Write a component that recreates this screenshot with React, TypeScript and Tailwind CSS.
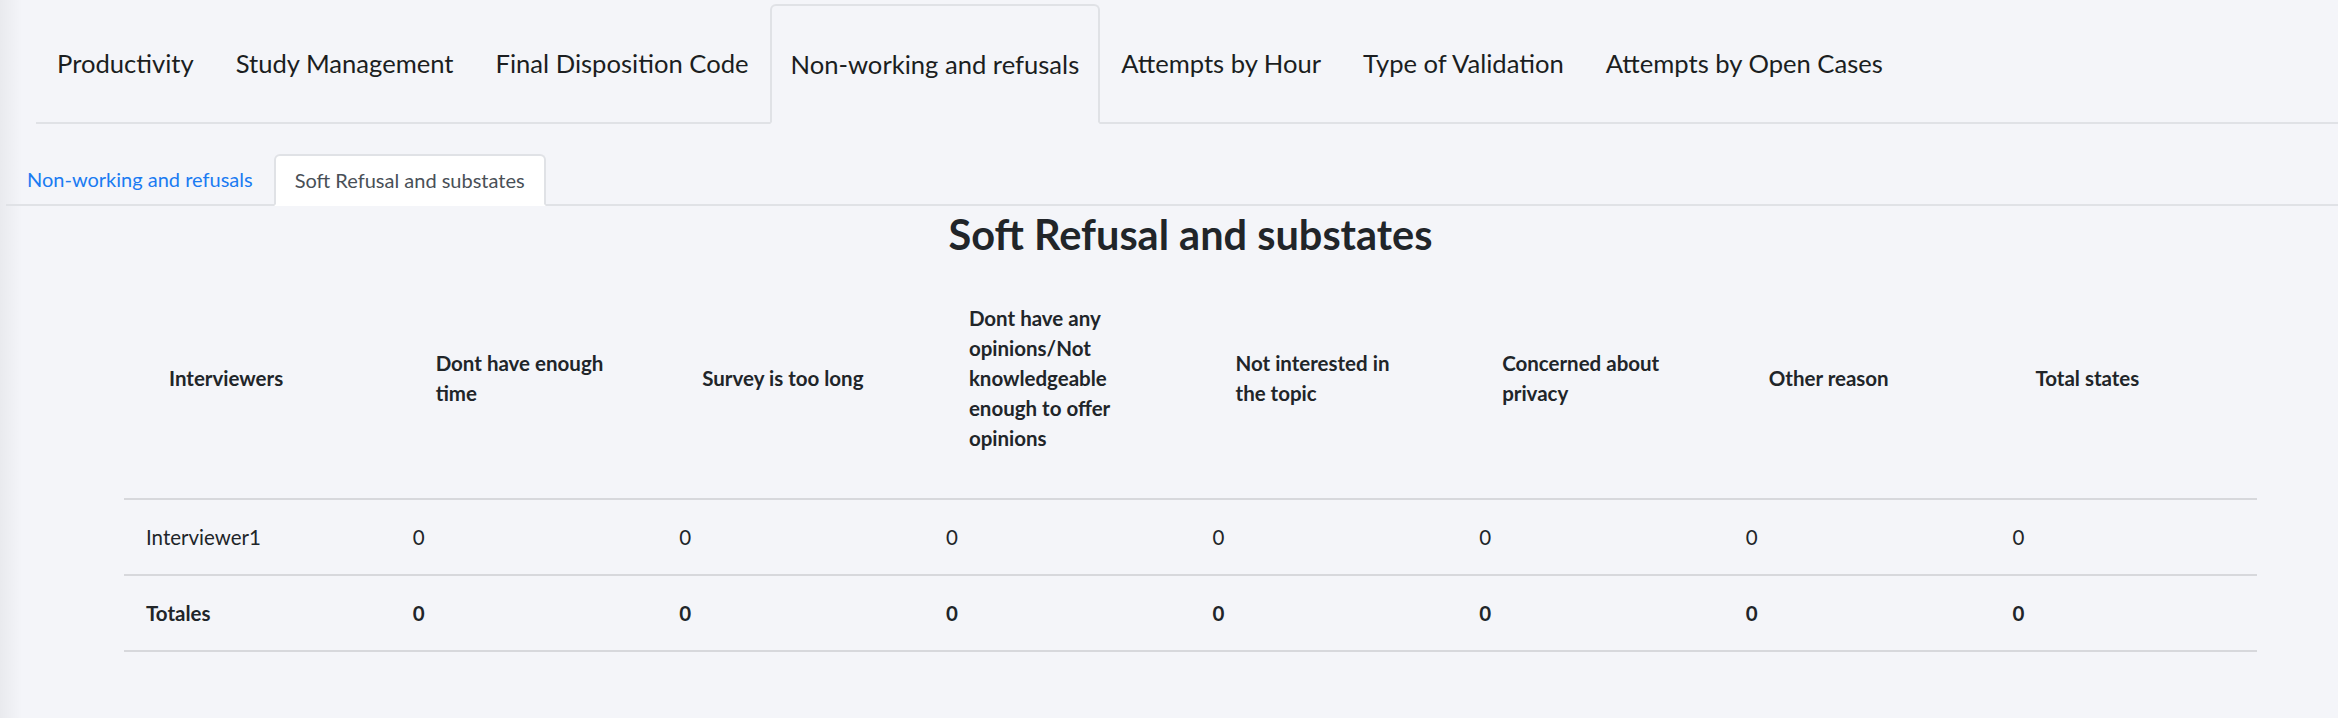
import React from "react";

const topTabs = [
  "Productivity",
  "Study Management",
  "Final Disposition Code",
  "Non-working and refusals",
  "Attempts by Hour",
  "Type of Validation",
  "Attempts by Open Cases",
];

const headers: string[][] = [
  ["Interviewers"],
  ["Dont have enough", "time"],
  ["Survey is too long"],
  ["Dont have any", "opinions/Not", "knowledgeable", "enough to offer", "opinions"],
  ["Not interested in", "the topic"],
  ["Concerned about", "privacy"],
  ["Other reason"],
  ["Total states"],
];

export default function App() {
  return (
    <div className="relative min-h-[718px] w-full overflow-hidden bg-[#f4f5f9] font-['Lato',sans-serif] text-[#212529]">
      <div className="pointer-events-none absolute inset-y-0 left-0 w-[22px] bg-gradient-to-r from-[#e9eaee] to-[#f4f5f9]" />
      <div className="relative">
        {/* top tabs */}
        <div className="ml-[36px] mt-[4px] flex border-b-2 border-[#e0e2e6]">
          {topTabs.map((t, i) =>
            i === 3 ? (
              <div
                key={t}
                className="-mb-[2px] flex h-[120px] items-center rounded-t-[6px] border-2 border-[#e0e2e6] border-b-[#f4f5f9] bg-[#f4f5f9] px-[19px] text-[25.6px] text-[#1b1e21]"
              >
                {t}
              </div>
            ) : (
              <div
                key={t}
                className="flex h-[118px] items-center border-2 border-transparent px-[19px] text-[25.6px] text-[#1b1e21]"
              >
                {t}
              </div>
            )
          )}
        </div>

        {/* sub tabs */}
        <div className="ml-[6px] mt-[30px] flex border-b-2 border-[#e0e2e6]">
          <div className="flex h-[50px] items-center border-2 border-transparent px-[19px] text-[20px] text-[#1a7bf2]">
            Non-working and refusals
          </div>
          <div className="-mb-[2px] flex h-[52px] items-center rounded-t-[6px] border-2 border-[#e0e2e6] border-b-white bg-white px-[19px] text-[20px] text-[#495057]">
            Soft Refusal and substates
          </div>
        </div>

        {/* title */}
        <div className="ml-[124px] mt-[4px] w-[2133px] text-center text-[41.5px] font-bold leading-[48px] text-[#212529]">
          Soft Refusal and substates
        </div>

        {/* table */}
        <table className="ml-[124px] w-[2133px] table-fixed border-collapse">
          <thead>
            <tr>
              {headers.map((h, i) => (
                <th
                  key={i}
                  className="border-b-2 border-[#d7d8dc] px-[45px] py-[45px] text-left align-middle text-[20.5px] font-bold leading-[30px]"
                >
                  {h.map((line, j) => (
                    <div key={j} className="whitespace-nowrap">
                      {line}
                    </div>
                  ))}
                </th>
              ))}
            </tr>
          </thead>
          <tbody>
            <tr>
              <td className="border-b-2 border-[#d7d8dc] px-[22px] py-[22px] text-[20.5px] leading-[30px]">
                Interviewer1
              </td>
              {Array.from({ length: 7 }).map((_, i) => (
                <td
                  key={i}
                  className="border-b-2 border-[#d7d8dc] px-[22px] py-[22px] text-[20.5px] leading-[30px]"
                >
                  0
                </td>
              ))}
            </tr>
            <tr>
              <td className="border-b-2 border-[#d7d8dc] px-[22px] py-[22px] text-[20.5px] font-bold leading-[30px]">
                Totales
              </td>
              {Array.from({ length: 7 }).map((_, i) => (
                <td
                  key={i}
                  className="border-b-2 border-[#d7d8dc] px-[22px] py-[22px] text-[20.5px] font-bold leading-[30px]"
                >
                  0
                </td>
              ))}
            </tr>
          </tbody>
        </table>
      </div>
    </div>
  );
}
